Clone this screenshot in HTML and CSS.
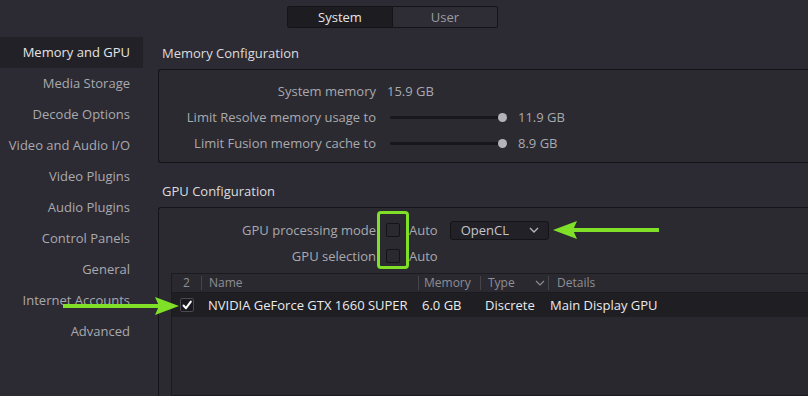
FILE: index.html
```html
<!DOCTYPE html>
<html lang="en">
<head>
  <meta charset="UTF-8">
  <title>Preferences - Memory and GPU</title>
  <link rel="stylesheet" href="styles.css">
</head>
<body>
  <!-- Abas do topo -->
  <div class="tabs">
    <div class="tab active">System</div>
    <div class="tab">User</div>
  </div>

  <div class="layout">
    <!-- Menu lateral -->
    <ul class="sidebar">
      <li class="selected">Memory and GPU</li>
      <li>Media Storage</li>
      <li>Decode Options</li>
      <li>Video and Audio I/O</li>
      <li>Video Plugins</li>
      <li>Audio Plugins</li>
      <li>Control Panels</li>
      <li>General</li>
      <li>Internet Accounts</li>
      <li>Advanced</li>
    </ul>

    <div class="main">
      <h2>Memory Configuration</h2>
      <div class="box memory">
        <div class="row">
          <span class="label">System memory</span>
          <span class="value">15.9 GB</span>
        </div>
        <div class="row">
          <span class="label">Limit Resolve memory usage to</span>
          <span class="slider"><span class="knob"></span></span>
          <span class="value">11.9 GB</span>
        </div>
        <div class="row">
          <span class="label">Limit Fusion memory cache to</span>
          <span class="slider"><span class="knob"></span></span>
          <span class="value">8.9 GB</span>
        </div>
      </div>

      <h2>GPU Configuration</h2>
      <div class="box gpu">
        <div class="row">
          <span class="label">GPU processing mode</span>
          <span class="check"></span>
          <span class="auto">Auto</span>
          <span class="select">OpenCL
            <svg width="10" height="6" viewBox="0 0 10 6"><path d="M1 1 L5 5 L9 1" fill="none" stroke="#b8b8bc" stroke-width="1.3"/></svg>
          </span>
        </div>
        <div class="row">
          <span class="label">GPU selection</span>
          <span class="check"></span>
          <span class="auto">Auto</span>
        </div>

        <div class="table">
          <div class="thead">
            <div class="c-num">2</div>
            <div class="c-name">Name</div>
            <div class="c-mem">Memory</div>
            <div class="c-type">Type
              <svg width="10" height="6" viewBox="0 0 10 6"><path d="M1 1 L5 5 L9 1" fill="none" stroke="#8c8c92" stroke-width="1.2"/></svg>
            </div>
            <div class="c-det">Details</div>
          </div>
          <div class="trow">
            <div class="c-num">
              <span class="check checked">
                <svg width="12" height="12" viewBox="0 0 12 12"><path d="M2.5 6.5 L5 9.2 L9.8 2.6" fill="none" stroke="#ffffff" stroke-width="2" stroke-linecap="round" stroke-linejoin="round"/></svg>
              </span>
            </div>
            <div class="c-name">NVIDIA GeForce GTX 1660 SUPER</div>
            <div class="c-mem">6.0 GB</div>
            <div class="c-type">Discrete</div>
            <div class="c-det">Main Display GPU</div>
          </div>
          <div class="tbody"></div>
        </div>
      </div>
    </div>
  </div>

  <!-- Marcações verdes por cima da tela -->
  <div class="highlight"></div>
  <svg class="arrow arrow-top" width="106" height="20" viewBox="0 0 106 20">
    <rect x="20" y="8" width="86" height="4" fill="#80e028"/>
    <polygon points="0,10 24,1 20,10 24,19" fill="#80e028"/>
  </svg>
  <svg class="arrow arrow-left" width="116" height="20" viewBox="0 0 116 20">
    <rect x="0" y="8" width="96" height="4" fill="#80e028"/>
    <polygon points="116,10 92,1 96,10 92,19" fill="#80e028"/>
  </svg>
</body>
</html>
```

FILE: styles.css
```css
body {
  margin: 0;
  width: 808px;
  height: 396px;
  overflow: hidden;
  background: #2c2b33;
  font-family: "Open Sans", "Noto Sans", sans-serif;
  font-size: 13px;
  color: #a9a9ae;
  position: relative;
}

.tabs {
  display: flex;
  padding: 6px 0 0 287px;
  height: 22px;
}

.tab {
  width: 104px;
  height: 20px;
  line-height: 20px;
  text-align: center;
  background: #2e2d35;
  border: 1px solid #141317;
  color: #9c9ca2;
}

.tab.active {
  background: #1d1c21;
  color: #e6e6e8;
  border-radius: 2px 0 0 2px;
}

.tab + .tab {
  border-left: none;
  border-radius: 0 2px 2px 0;
}

.layout {
  display: flex;
  margin-top: 9px;
}

.sidebar {
  list-style: none;
  margin: 0;
  padding: 0;
  width: 143px;
  flex-shrink: 0;
}

.sidebar li {
  height: 31px;
  line-height: 31px;
  text-align: right;
  padding-right: 13px;
  white-space: nowrap;
}

.sidebar li.selected {
  background: #222127;
  color: #e4e4e6;
}

.main {
  flex: 1;
  padding-left: 15px;
}

h2 {
  margin: 0;
  height: 32px;
  line-height: 32px;
  padding-left: 4px;
  font-size: 13px;
  font-weight: normal;
  color: #dcdcde;
}

.box {
  border: 1px solid #141317;
  border-right: none;
  border-radius: 3px 0 0 3px;
  background: #2b2a31;
}

.memory {
  height: 94px;
  padding-top: 8px;
  box-sizing: border-box;
  margin-bottom: 12px;
}

.row {
  display: flex;
  align-items: center;
  height: 26px;
}

.label {
  width: 217px;
  text-align: right;
  white-space: nowrap;
}

.value {
  margin-left: 11px;
}

.slider {
  position: relative;
  width: 113px;
  height: 3px;
  margin-left: 14px;
  background: #18171b;
  border-radius: 2px;
}

.slider + .value {
  margin-left: 15px;
}

.knob {
  position: absolute;
  right: -4px;
  top: -3px;
  width: 9px;
  height: 9px;
  border-radius: 50%;
  background: #b4b4b8;
}

.gpu {
  height: 200px;
  padding-top: 9px;
  box-sizing: border-box;
}

.check {
  display: inline-block;
  width: 12px;
  height: 12px;
  margin-left: 10px;
  border: 1px solid #141317;
  border-radius: 2px;
  background: #2a292f;
}

.auto {
  margin-left: 9px;
}

.select {
  display: flex;
  align-items: center;
  justify-content: space-between;
  margin-left: 12px;
  width: 99px;
  height: 19px;
  padding: 0 9px 0 10px;
  box-sizing: border-box;
  background: #222127;
  border: 1px solid #141317;
  border-radius: 3px;
  color: #c4c4c8;
}

.table {
  margin: 4px 0 0 12px;
  border: 1px solid #1c1b20;
  border-right: none;
}

.thead, .trow {
  display: flex;
  white-space: nowrap;
}

.thead {
  height: 18px;
  line-height: 18px;
  font-size: 12px;
  color: #8e8e94;
  background: #2a2930;
  border-bottom: 1px solid #1c1b20;
}

.thead > div {
  border-right: 1px solid #45444b;
  margin: 2px 0;
  line-height: 14px;
}

.thead > div:last-child {
  border-right: none;
}

.trow {
  height: 24px;
  line-height: 24px;
  background: #1f1e23;
  color: #eaeaec;
}

.c-num {
  width: 29px;
  text-align: center;
  flex-shrink: 0;
}

.c-name {
  width: 209px;
  padding-left: 7px;
  flex-shrink: 0;
}

.c-mem {
  width: 56px;
  padding-left: 5px;
  flex-shrink: 0;
}

.c-type {
  width: 57px;
  padding-left: 7px;
  flex-shrink: 0;
  display: flex;
  align-items: center;
  justify-content: space-between;
  padding-right: 3px;
}

.trow .c-type {
  display: block;
  padding-right: 0;
}

.c-det {
  padding-left: 8px;
}

.trow .c-num {
  display: flex;
  align-items: center;
  justify-content: center;
}

.check.checked {
  display: flex;
  margin: 0;
  background: #1a191d;
  border-color: #4a4950;
}

.tbody {
  height: 78px;
  background: #29282f;
}

.highlight {
  position: absolute;
  left: 377px;
  top: 211px;
  width: 26px;
  height: 52px;
  border: 3px solid #80e028;
  border-radius: 4px;
}

.arrow {
  position: absolute;
}

.arrow-top {
  left: 553px;
  top: 220px;
}

.arrow-left {
  left: 63px;
  top: 296px;
}
```
